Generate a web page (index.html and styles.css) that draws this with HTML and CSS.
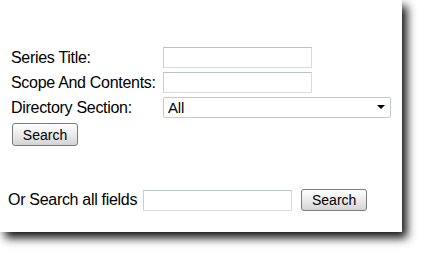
FILE: index.html
```html
<!DOCTYPE html>
<html lang="en">
<head>
    <meta charset="UTF-8">
    <meta name="viewport" content="width=device-width, initial-scale=1.0">
    <title>Series Search</title>
    <link rel="stylesheet" href="styles.css">
</head>
<body>
    <div class="panel">
        <form class="search-form">
            <div class="fields">
                <label for="title">Series Title:</label>
                <input id="title" type="text" class="text-input">
                <label for="scope">Scope And Contents:</label>
                <input id="scope" type="text" class="text-input">
                <label for="section">Directory Section:</label>
                <span class="select-wrap">
                    <select id="section" class="select-input">
                        <option>All</option>
                    </select>
                </span>
            </div>
            <button type="button" class="btn">Search</button>
        </form>

        <form class="all-fields">
            <label for="all">Or Search all fields</label>
            <input id="all" type="text" class="text-input">
            <button type="button" class="btn">Search</button>
        </form>
    </div>
</body>
</html>
```

FILE: styles.css
```css
html, body {
    height: 100%;
}
body {
    font-family: "Liberation Sans", Arial, sans-serif;
    margin: 0;
    min-height: 254px;
    background-color: #ffffff;
}
.panel {
    width: 402px;
    height: 232px;
    background: #ffffff;
    box-shadow: 5px 6px 9px rgba(0, 0, 0, 0.92);
    box-sizing: border-box;
    padding-top: 47px;
    font-size: 16px;
    letter-spacing: -0.3px;
    color: #000;
}
.search-form {
    padding-left: 11px;
}
.fields {
    display: grid;
    grid-template-columns: 152px auto;
    row-gap: 4px;
    align-items: center;
}
.fields label {
    line-height: 20px;
}
.text-input {
    width: 149px;
    height: 21px;
    box-sizing: border-box;
    border: 1px solid #d4dbe2;
    border-top-color: #bcc1c6;
    border-left-color: #c8cdd2;
    padding: 0 3px;
    font: inherit;
    margin: 0;
}
.select-wrap {
    position: relative;
    width: 228px;
    display: block;
}
.select-input {
    appearance: none;
    -webkit-appearance: none;
    width: 100%;
    height: 21px;
    box-sizing: border-box;
    border: 1px solid #c4cad0;
    border-radius: 2px;
    background: #fff;
    font-family: inherit;
    font-size: 15px;
    letter-spacing: -0.2px;
    padding: 0 4px;
    margin: 0;
    color: #000;
}
.select-wrap::after {
    content: "";
    position: absolute;
    right: 6px;
    top: 8px;
    border-left: 4px solid transparent;
    border-right: 4px solid transparent;
    border-top: 4px solid #000;
    pointer-events: none;
}
.btn {
    width: 66px;
    height: 23px;
    margin-top: 5px;
    margin-left: 1px;
    border: 1px solid #7a7a7a;
    border-radius: 3px;
    background: linear-gradient(#ffffff, #e6e6e6 60%, #d4d4d4);
    font-family: inherit;
    font-size: 14px;
    letter-spacing: 0;
    color: #000;
    padding: 0;
}
.all-fields {
    display: flex;
    align-items: center;
    margin-top: 43px;
    padding-left: 8px;
}
.all-fields label {
    margin-right: 6px;
}
.all-fields .btn {
    margin: 0 0 0 9px;
    height: 22px;
}
```
